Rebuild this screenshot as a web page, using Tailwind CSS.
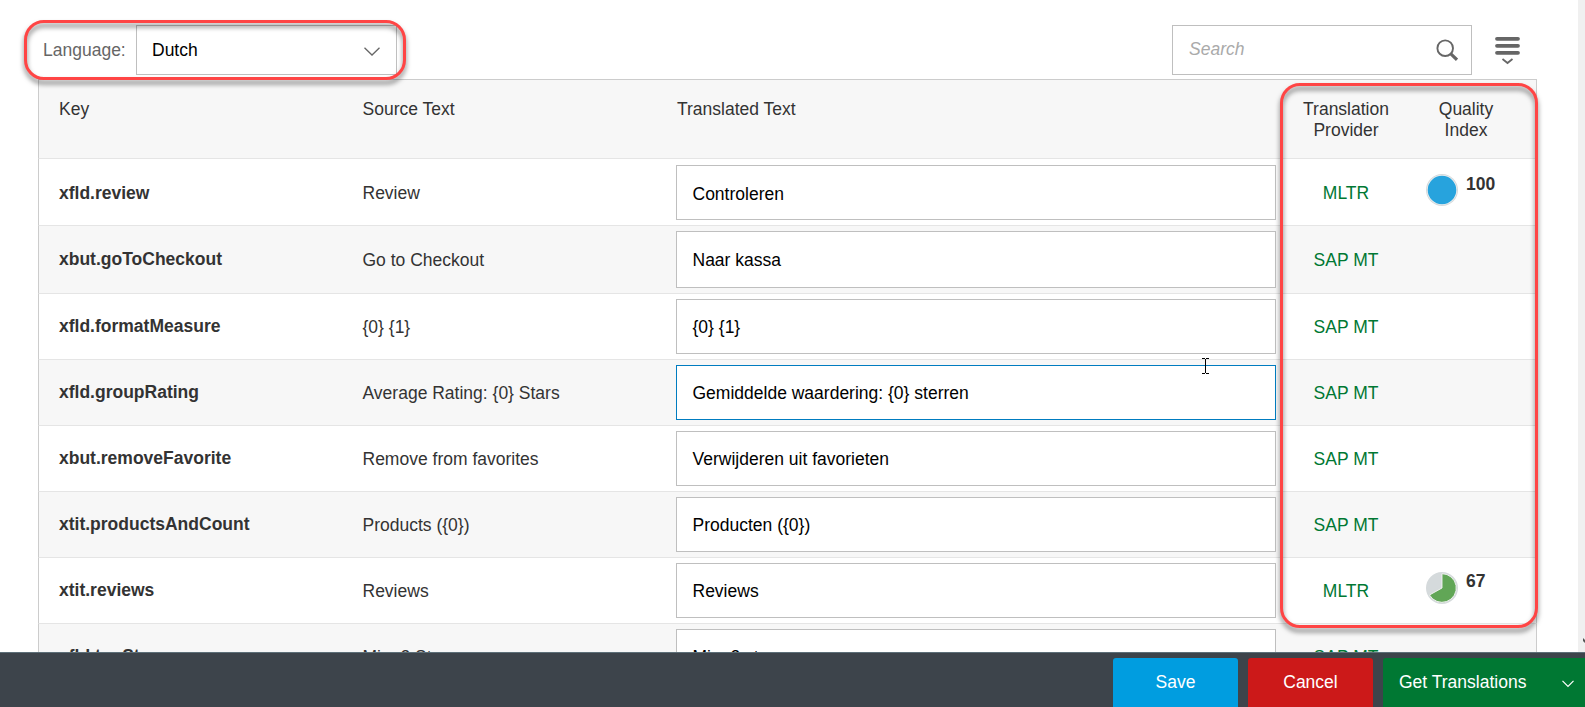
<!DOCTYPE html>
<html lang="en">
<head>
<meta charset="utf-8">
<title>Translations</title>
<script src="https://cdn.jsdelivr.net/npm/@tailwindcss/browser@4"></script>
</head>
<body class="relative flex h-[707px] w-[1585px] flex-col overflow-hidden bg-white font-['Liberation_Sans',Arial,sans-serif] text-[17.5px] leading-[21px] text-[#333]">
<main class="flex min-h-0 flex-1 justify-between overflow-hidden">
  <div class="ml-[38px] flex w-[1499px] flex-col">
    <div class="flex h-[79px] shrink-0 items-start pt-[25px]">
      <label class="w-[98px] pt-[15px] pl-[5px] text-[#666]">Language:</label>
      <div class="flex h-[50px] w-[261px] items-center justify-between border border-[#bfbfbf] pr-[16px] pl-[15px] text-black"><span>Dutch</span>
        <svg class="mt-[2px] h-[9px] w-4" viewBox="0 0 16 9" fill="none" stroke="#666" stroke-width="1.3"><path d="M.5.7 8 8 15.500.7"/></svg>
      </div>
      <div class="ml-auto flex h-[50px] w-[300px] items-center justify-between border border-[#bfbfbf] pr-[13px] pl-[16px]"><span class="-mt-[2px] text-[#aaa] italic">Search</span>
        <svg class="h-[22px] w-[22px]" viewBox="0 0 22 22" fill="none" stroke="#666"><circle cx="9.200" cy="9.200" r="7.800" stroke-width="1.900"/><path d="M14.600 14.600 21 20.800" stroke-width="3.200"/></svg>
      </div>
      <svg class="mt-[11px] mr-[17px] ml-[23px] h-[30px] w-[25px]" viewBox="0 0 25 30" fill="none" stroke="#666"><path d="M2 2.800H23M2 9.800H23M2 16.800H23" stroke-width="3.800" stroke-linecap="round"/><path d="M7.500 23 12.500 27 17.500 23" stroke-width="1.800"/></svg>
    </div>
    <div class="flex h-[80px] shrink-0 border border-[#ccc] border-b-[#e5e5e5] bg-[#f7f7f7] pt-[19px]">
      <div class="w-[303px] pl-5">Key</div><div class="w-[314px] pl-[20.500px]">Source Text</div><div class="w-[620px] pl-[21px]">Translated Text</div>
      <div class="w-[140px] text-center">Translation<br>Provider</div><div class="w-[100px] text-center">Quality<br>Index</div>
    </div>
    <div id="rows" class="flex flex-col"></div>
  </div>
  <div class="relative w-[7px] bg-[#f0f0f0]"><svg class="absolute right-0 bottom-[9px] h-[5px] w-[2px]" viewBox="0 0 2 5"><path d="M0 0 2 2V5L0 3Z" fill="#555"/></svg></div>
</main>
<footer class="flex h-[55px] shrink-0 justify-end gap-[10px] border-t border-[#5d6f78] bg-[#3d444b] pt-[5px] text-white [text-shadow:0_1px_1px_#0009]">
  <button class="h-[60px] w-[125px] rounded-[3px] bg-[#009de0] pb-[11px]">Save</button>
  <button class="h-[60px] w-[125px] rounded-[3px] bg-[#cc1919] pb-[11px]">Cancel</button>
  <button class="flex h-[60px] w-[202px] items-center justify-between rounded-l-[3px] bg-[#007833] pr-[11px] pb-[11px] pl-4"><span>Get Translations</span>
    <svg class="mt-[2px] h-[8px] w-[12px]" viewBox="0 0 12 8" fill="none" stroke="#fff" stroke-width="1.200"><path d="M.5.800 6 6.500 11.500.800"/></svg></button>
</footer>
<div class="pointer-events-none absolute top-[20px] left-[24px] h-[60px] w-[382px] rounded-[20px] border-3 border-[#ff4545] drop-shadow-[0_4px_2.5px_#0008]"></div>
<div class="pointer-events-none absolute top-[83px] left-[1280px] h-[545px] w-[258px] rounded-[20px] border-3 border-[#ff4545] drop-shadow-[0_4px_2.5px_#0008]"></div>
<svg class="pointer-events-none absolute top-[358px] left-[1202px] h-4 w-[7px]" viewBox="0 0 7 16" fill="#000"><path d="M0 0H3V1H0ZM4 0H7V1H4ZM0 15H3V16H0ZM4 15H7V16H4ZM3 1H4V15H3Z"/></svg>
<script>
const rows=[
['xfld.review','Review','Controleren','MLTR',100],
['xbut.goToCheckout','Go to Checkout','Naar kassa','SAP MT'],
['xfld.formatMeasure','{0} {1}','{0} {1}','SAP MT'],
['xfld.groupRating','Average Rating: {0} Stars','Gemiddelde waardering: {0} sterren','SAP MT'],
['xbut.removeFavorite','Remove from favorites','Verwijderen uit favorieten','SAP MT'],
['xtit.productsAndCount','Products ({0})','Producten ({0})','SAP MT'],
['xtit.reviews','Reviews','Reviews','MLTR',67],
['xfld.topStars','Min. 2 Stars','Min. 2 sterren','SAP MT']];
const chart=v=>`<svg class="h-8 w-8" viewBox="0 0 32 32"><circle cx="16" cy="16" r="16" fill="#d5dadc"/>${v===100?'<circle cx="16" cy="16" r="15" fill="#fff" opacity=".6"/><circle cx="16" cy="16" r="14.300" fill="#27a3dd"/>':'<path d="M16 16V1.700A14.300 14.300 0 1 1 3.500 23Z" fill="#61a656" stroke="#f5f5f5" stroke-width=".9"/>'}</svg><b class="ml-[8px] ${v===100?'mt-0':'-mt-[1px]'}">${v}</b>`;
document.getElementById('rows').innerHTML=rows.map((r,i)=>`<div class="flex shrink-0 border border-t-0 border-[#ccc] border-b-[#e5e5e5] ${i===0?'h-[67px] pt-[6px]':i===1?'h-[68px] pt-[5px]':'h-[66px] pt-[5px]'} ${i%2?'bg-[#f7f7f7]':'bg-white'}">
<div class="w-[303px] pl-5 font-bold ${i<2?'pt-[18px]':'pt-[17px]'}">${r[0]}</div>
<div class="w-[314px] pl-[20.500px] ${i===1?'pt-[19px]':'pt-[18px]'}">${r[1]}</div>
<div class="w-[620px] pl-5"><div class="flex w-[600px] items-center border bg-white pl-[15.500px] text-black ${i===0?'pt-[3px]':'pt-[2px]'} ${i===1?'h-[57px]':'h-[55px]'} ${i===3?'border-[#007cc0]':'border-[#bfbfbf]'}">${r[2]}</div></div>
<div class="w-[140px] text-center text-[#007833] ${i===1?'pt-[19px]':'pt-[18px]'}">${r[3]}</div>
<div class="flex items-start pt-[9px] pl-[10px]">${r[4]?chart(r[4]):''}</div></div>`).join('');
</script>
</body>
</html>
